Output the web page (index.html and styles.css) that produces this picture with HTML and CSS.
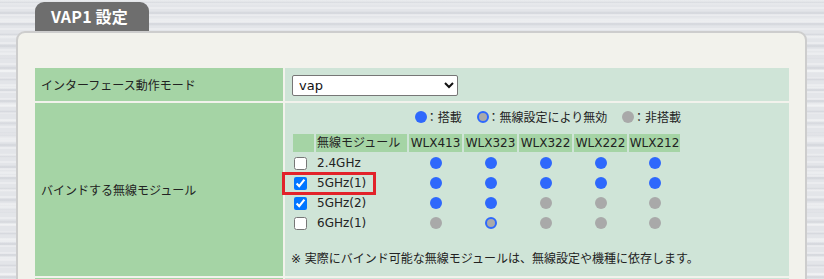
FILE: index.html
```html
<!DOCTYPE html>
<html lang="ja">
<head>
<meta charset="utf-8">
<title>VAP1 設定</title>
<link rel="stylesheet" href="styles.css">
</head>
<body>
<div class="page">
  <div class="tab">VAP1 設定</div>
  <div class="panel">
    <table class="form">
      <tr class="row-mode">
        <th>インターフェース動作モード</th>
        <td>
          <select class="mode-select">
            <option>vap</option>
          </select>
        </td>
      </tr>
      <tr>
        <th>バインドする無線モジュール</th>
        <td class="bind-cell">
          <div class="bind-wrap">
            <div class="legend">
              <span class="legend-item"><span class="dot on"></span>：搭載</span>
              <span class="legend-item"><span class="dot off"></span>：無線設定により無効</span>
              <span class="legend-item"><span class="dot none"></span>：非搭載</span>
            </div>
            <div class="modules-box">
              <table class="modules">
                <colgroup>
                  <col class="c-chk">
                  <col class="c-name">
                  <col class="c-model">
                  <col class="c-model">
                  <col class="c-model">
                  <col class="c-model">
                  <col class="c-last">
                </colgroup>
                <tr class="head">
                  <td class="hd"></td>
                  <td class="hd name">無線モジュール</td>
                  <td class="hd model">WLX413</td>
                  <td class="hd model">WLX323</td>
                  <td class="hd model">WLX322</td>
                  <td class="hd model">WLX222</td>
                  <td class="hd model">WLX212</td>
                </tr>
                <tr>
                  <td><input type="checkbox" class="chk"></td>
                  <td class="name">2.4GHz</td>
                  <td class="mark"><span class="dot on"></span></td>
                  <td class="mark"><span class="dot on"></span></td>
                  <td class="mark"><span class="dot on"></span></td>
                  <td class="mark"><span class="dot on"></span></td>
                  <td class="mark"><span class="dot on"></span></td>
                </tr>
                <tr>
                  <td><input type="checkbox" class="chk" checked></td>
                  <td class="name">5GHz(1)</td>
                  <td class="mark"><span class="dot on"></span></td>
                  <td class="mark"><span class="dot on"></span></td>
                  <td class="mark"><span class="dot on"></span></td>
                  <td class="mark"><span class="dot on"></span></td>
                  <td class="mark"><span class="dot on"></span></td>
                </tr>
                <tr>
                  <td><input type="checkbox" class="chk" checked></td>
                  <td class="name">5GHz(2)</td>
                  <td class="mark"><span class="dot on"></span></td>
                  <td class="mark"><span class="dot on"></span></td>
                  <td class="mark"><span class="dot none"></span></td>
                  <td class="mark"><span class="dot none"></span></td>
                  <td class="mark"><span class="dot none"></span></td>
                </tr>
                <tr>
                  <td><input type="checkbox" class="chk"></td>
                  <td class="name">6GHz(1)</td>
                  <td class="mark"><span class="dot none"></span></td>
                  <td class="mark"><span class="dot off"></span></td>
                  <td class="mark"><span class="dot none"></span></td>
                  <td class="mark"><span class="dot none"></span></td>
                  <td class="mark"><span class="dot none"></span></td>
                </tr>
              </table>
              <div class="highlight"></div>
            </div>
            <div class="note">※ 実際にバインド可能な無線モジュールは、無線設定や機種に依存します。</div>
          </div>
        </td>
      </tr>
      <tr class="row-next">
        <th>&nbsp;</th>
        <td>&nbsp;</td>
      </tr>
    </table>
  </div>
</div>
</body>
</html>
```

FILE: styles.css
```css
html, body {
  margin: 0;
  padding: 0;
  overflow: hidden;
}

body {
  font-family: "DejaVu Sans", "Noto Sans CJK JP", sans-serif;
  font-size: 12px;
  color: #222;
  background-color: #e3e5e9;
  background-image:
    repeating-linear-gradient(180deg, rgba(255,255,255,0) 0px, rgba(255,255,255,0.55) 1px, rgba(255,255,255,0) 2px, rgba(255,255,255,0) 7px),
    repeating-linear-gradient(180deg, rgba(200,203,210,0) 0px, rgba(200,203,210,0.6) 2px, rgba(200,203,210,0) 4px, rgba(200,203,210,0) 11px),
    repeating-linear-gradient(180deg, rgba(255,255,255,0) 0px, rgba(255,255,255,0.4) 3px, rgba(255,255,255,0) 5px, rgba(255,255,255,0) 17px);
  height: 279px;
}

.page {
  padding-top: 2px;
}

.tab {
  margin-left: 35px;
  width: 114px;
  height: 29px;
  box-sizing: border-box;
  background: #6e6e6e;
  border-radius: 9px 9px 0 0;
  color: #fff;
  font-family: "Noto Sans CJK JP", sans-serif;
  font-weight: bold;
  font-size: 16px;
  line-height: 29px;
  padding-left: 16px;
  letter-spacing: 0.2px;
}

.panel {
  margin-left: 16px;
  width: 791px;
  box-sizing: border-box;
  background: #f2f2ec;
  border: 2px solid #cdcdcd;
  border-radius: 9px 9px 0 0;
  padding: 33px 14px 0 15px;
  height: 300px;
}

.form {
  width: 100%;
  border-collapse: separate;
  border-spacing: 2px;
}

.form th {
  background: #a5d4a5;
  font-weight: normal;
  text-align: left;
  width: 236px;
  padding: 0 6px;
  vertical-align: middle;
}

.form > tbody > tr > td {
  background: #cfe4d7;
  padding: 0 7px;
  vertical-align: middle;
}

.row-mode th,
.row-mode td {
  height: 33px;
}

.mode-select {
  width: 166px;
  height: 21px;
  border: 1px solid #767676;
  border-radius: 2px;
  background: #fff;
  font-family: "DejaVu Sans", "Noto Sans CJK JP", sans-serif;
  font-size: 13px;
  padding: 0 2px;
  margin: 1px 0 0 0;
  color: #111;
}

.form > tbody > tr > td.bind-cell {
  padding: 5px 6px 8px 6px;
}

.bind-wrap {
  display: inline-block;
}

.legend {
  width: 390px;
  text-align: right;
  line-height: 18px;
  margin-bottom: 5px;
  font-family: "Noto Sans CJK JP", sans-serif;
}

.legend-item {
  display: inline-flex;
  align-items: center;
  margin-left: 12px;
}

.legend-item .dot {
  margin-right: -1px;
}

.modules-box {
  position: relative;
}

.modules {
  table-layout: fixed;
  width: 391px;
  border-collapse: separate;
  border-spacing: 2px;
}

.c-chk { width: 21px; }
.c-name { width: 91px; }
.c-model { width: 53px; }
.c-last { width: 51px; }

.modules td {
  height: 18px;
  padding: 0;
  line-height: 18px;
  vertical-align: middle;
  white-space: nowrap;
}

.modules td.hd {
  background: #a5d4a5;
}

.modules td.name {
  padding-left: 1px;
}

.modules td.model {
  text-align: center;
}

.modules td.mark {
  text-align: center;
  font-size: 0;
}

.chk {
  width: 13px;
  height: 13px;
  margin: 0 0 0 1px;
  display: block;
}

.dot {
  display: inline-block;
  width: 12px;
  height: 12px;
  border-radius: 50%;
  box-sizing: border-box;
  vertical-align: middle;
}

.dot.on {
  background: #2e68fc;
}

.dot.off {
  background: #a9a9a9;
  border: 2px solid #2e68fc;
}

.dot.none {
  background: #a9a9a9;
}

.highlight {
  position: absolute;
  left: -9px;
  top: 40px;
  width: 94px;
  height: 23px;
  box-sizing: border-box;
  border: 3px solid #e2222a;
}

.note {
  margin-top: 16px;
  line-height: 18px;
}

.row-next th,
.row-next td {
  height: 30px;
}
```
